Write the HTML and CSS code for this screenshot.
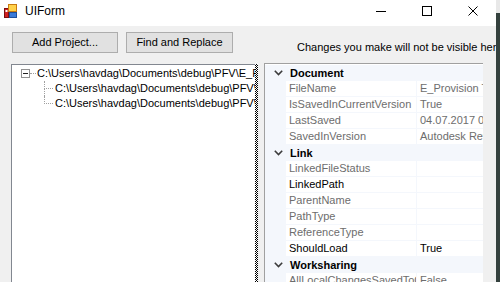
FILE: index.html
```html
<!DOCTYPE html>
<html>
<head>
<meta charset="utf-8">
<link rel="stylesheet" href="styles.css">
</head>
<body>
<div class="window">
  <div class="titlebar">
    <svg class="app-icon" width="14" height="14" viewBox="0 0 14 14">
      <rect x="0.5" y="4.5" width="4" height="9" fill="#d02020" stroke="#7a1010"/>
      <rect x="1.5" y="6" width="2" height="2" fill="#ffffff"/>
      <rect x="4.5" y="0.5" width="8" height="7" fill="#ffd24a" stroke="#c87a10"/>
      <rect x="5.5" y="8.5" width="7" height="5" fill="#3a7ad8" stroke="#1f4f9a"/>
    </svg>
    <span class="title">UIForm</span>
    <div class="controls">
      <div class="ctl"><svg width="10" height="10" viewBox="0 0 10 10"><line x1="0" y1="5.5" x2="10" y2="5.5" stroke="#000" stroke-width="1"/></svg></div>
      <div class="ctl"><svg width="10" height="10" viewBox="0 0 10 10"><rect x="0.5" y="0.5" width="9" height="9" fill="none" stroke="#000" stroke-width="1"/></svg></div>
      <div class="ctl"><svg width="10" height="10" viewBox="0 0 10 10"><path d="M0.5 0.5 L9.5 9.5 M9.5 0.5 L0.5 9.5" stroke="#000" stroke-width="1"/></svg></div>
    </div>
  </div>
  <div class="client">
    <div class="toolbar">
      <div class="btn btn-add">Add Project...</div>
      <div class="btn btn-find">Find and Replace</div>
      <div class="notice">Changes you make will not be visible here until the project is reloaded</div>
    </div>
    <div class="main">
      <div class="tree">
        <div class="node root">
          <span class="expander"><span class="minus"></span></span>
          <span class="hline"></span>
          <span class="node-text">C:\Users\havdag\Documents\debug\PFV\E_Provision Test.rvt</span>
        </div>
        <div class="node child">
          <span class="conn"><span class="conn-top"></span><span class="conn-bot"></span></span>
          <span class="node-text">C:\Users\havdag\Documents\debug\PFV\Link_A.rvt</span>
        </div>
        <div class="node child last">
          <span class="conn"><span class="conn-top"></span><span class="conn-bot"></span></span>
          <span class="node-text">C:\Users\havdag\Documents\debug\PFV\Link_B.rvt</span>
        </div>
      </div>
      <div class="splitter"></div>
      <div class="propgrid">
        <div class="cat"><span class="chev"><svg width="9" height="6" viewBox="0 0 9 6"><path d="M0.8 0.8 L4.5 4.5 L8.2 0.8" fill="none" stroke="#3c3c3c" stroke-width="1.6"/></svg></span><span class="cat-name">Document</span></div>
        <div class="prop"><span class="gut"></span><span class="pname dim">FileName</span><span class="pval dim">E_Provision Test.rvt</span></div>
        <div class="prop"><span class="gut"></span><span class="pname dim">IsSavedInCurrentVersion</span><span class="pval dim">True</span></div>
        <div class="prop"><span class="gut"></span><span class="pname dim">LastSaved</span><span class="pval dim">04.07.2017 09:12:44</span></div>
        <div class="prop"><span class="gut"></span><span class="pname dim">SavedInVersion</span><span class="pval dim">Autodesk Revit 2017</span></div>
        <div class="cat"><span class="chev"><svg width="9" height="6" viewBox="0 0 9 6"><path d="M0.8 0.8 L4.5 4.5 L8.2 0.8" fill="none" stroke="#3c3c3c" stroke-width="1.6"/></svg></span><span class="cat-name">Link</span></div>
        <div class="prop"><span class="gut"></span><span class="pname dim">LinkedFileStatus</span><span class="pval"></span></div>
        <div class="prop"><span class="gut"></span><span class="pname">LinkedPath</span><span class="pval"></span></div>
        <div class="prop"><span class="gut"></span><span class="pname dim">ParentName</span><span class="pval"></span></div>
        <div class="prop"><span class="gut"></span><span class="pname dim">PathType</span><span class="pval"></span></div>
        <div class="prop"><span class="gut"></span><span class="pname dim">ReferenceType</span><span class="pval"></span></div>
        <div class="prop"><span class="gut"></span><span class="pname">ShouldLoad</span><span class="pval">True</span></div>
        <div class="cat"><span class="chev"><svg width="9" height="6" viewBox="0 0 9 6"><path d="M0.8 0.8 L4.5 4.5 L8.2 0.8" fill="none" stroke="#3c3c3c" stroke-width="1.6"/></svg></span><span class="cat-name">Worksharing</span></div>
        <div class="prop"><span class="gut"></span><span class="pname dim">AllLocalChangesSavedToCentral</span><span class="pval dim">False</span></div>
      </div>
    </div>
  </div>
</div>
<div class="desktop"></div>
</body>
</html>
```

FILE: styles.css
```css
html, body {
  margin: 0;
  padding: 0;
}
body {
  width: 500px;
  height: 282px;
  overflow: hidden;
  display: flex;
  font-family: "Liberation Sans", Arial, sans-serif;
  font-size: 11px;
  color: #000;
  background: #2f3a38;
}
.window {
  width: 496px;
  height: 282px;
  flex: none;
  background: #f0f0f0;
  display: flex;
  flex-direction: column;
  overflow: hidden;
}
.desktop {
  width: 4px;
  height: 282px;
  flex: none;
  background: linear-gradient(#e8e8e8 0 13px, #34413e 13px 100%);
}
.titlebar {
  height: 26px;
  flex: none;
  background: #fff;
  display: flex;
  align-items: flex-start;
}
.app-icon {
  margin: 4px 0 0 4px;
  flex: none;
}
.title {
  margin: 4px 0 0 7px;
  font-size: 12px;
  line-height: 14px;
}
.controls {
  margin-left: auto;
  display: flex;
}
.ctl {
  width: 46px;
  height: 26px;
  display: flex;
  justify-content: center;
  align-items: flex-start;
}
.ctl svg {
  margin-top: 6px;
}
.client {
  flex: 1;
  display: flex;
  flex-direction: column;
  min-height: 0;
}
.toolbar {
  margin-top: 6px;
  padding-left: 12px;
  display: flex;
  align-items: flex-start;
  height: 21px;
  flex: none;
  min-width: 0;
}
.btn {
  box-sizing: border-box;
  height: 21px;
  background: #e1e1e1;
  border: 1px solid #adadad;
  display: flex;
  align-items: center;
  justify-content: center;
  line-height: 13px;
  white-space: nowrap;
  flex: none;
}
.btn-add {
  width: 106px;
}
.btn-find {
  width: 107px;
  margin-left: 8px;
}
.notice {
  margin: 9px 0 0 64px;
  line-height: 13px;
  white-space: nowrap;
  flex: 1;
  min-width: 0;
  overflow: hidden;
}
.main {
  margin-top: 11px;
  padding-left: 11px;
  flex: 1;
  display: flex;
  align-items: stretch;
  min-height: 0;
}
.tree {
  box-sizing: border-box;
  width: 244px;
  flex: none;
  background: #fff;
  border-left: 1px solid #828790;
  border-top: 1px solid #828790;
  padding-top: 1px;
  overflow: hidden;
}
.node {
  height: 15px;
  display: flex;
  align-items: center;
  white-space: nowrap;
  min-width: 0;
}
.node-text {
  line-height: 13px;
  flex: 1;
  min-width: 0;
  overflow: hidden;
}
.root .expander {
  box-sizing: border-box;
  width: 9px;
  height: 9px;
  margin-left: 9px;
  border: 1px solid #919191;
  background: #fff;
  display: flex;
  align-items: center;
  justify-content: center;
  flex: none;
}
.minus {
  width: 5px;
  height: 1px;
  background: #222;
}
.hline {
  width: 6px;
  height: 0;
  border-top: 1px dotted #a0a0a0;
  margin-right: 1px;
  flex: none;
}
.conn {
  width: 9px;
  height: 15px;
  margin-left: 32px;
  margin-right: 2px;
  display: flex;
  flex-direction: column;
  flex: none;
}
.conn-top {
  box-sizing: border-box;
  height: 8px;
  border-left: 1px dotted #a0a0a0;
  border-bottom: 1px dotted #a0a0a0;
}
.conn-bot {
  height: 7px;
  border-left: 1px dotted #a0a0a0;
}
.last .conn-bot {
  border-left: none;
}
.splitter {
  width: 3px;
  flex: none;
  background-image: repeating-conic-gradient(#000 0% 25%, #fff 0% 50%);
  background-size: 2px 2px;
}
.propgrid {
  box-sizing: border-box;
  width: 219px;
  flex: none;
  margin-left: 6px;
  margin-top: -1px;
  border-left: 1px solid #a0a0a0;
  border-top: 1px solid #a0a0a0;
  background: #fff;
  padding-top: 1px;
  overflow: hidden;
}
.cat {
  height: 16px;
  background: #f4f7fc;
  display: flex;
  align-items: center;
  white-space: nowrap;
}
.chev {
  width: 25px;
  padding-left: 9px;
  box-sizing: border-box;
  display: flex;
  align-items: center;
  flex: none;
}
.cat-name {
  font-weight: bold;
  line-height: 13px;
}
.prop {
  height: 16px;
  display: grid;
  grid-template-columns: 21px 131px minmax(0, 1fr);
}
.gut {
  background: #f4f7fc;
}
.pname, .pval {
  box-sizing: border-box;
  background: #fff;
  border-bottom: 1px solid #f4f7fc;
  padding-left: 3px;
  line-height: 15px;
  white-space: nowrap;
  overflow: hidden;
  min-width: 0;
}
.pname {
  border-right: 1px solid #f4f7fc;
}
.dim {
  color: #6d6d6d;
}
```
